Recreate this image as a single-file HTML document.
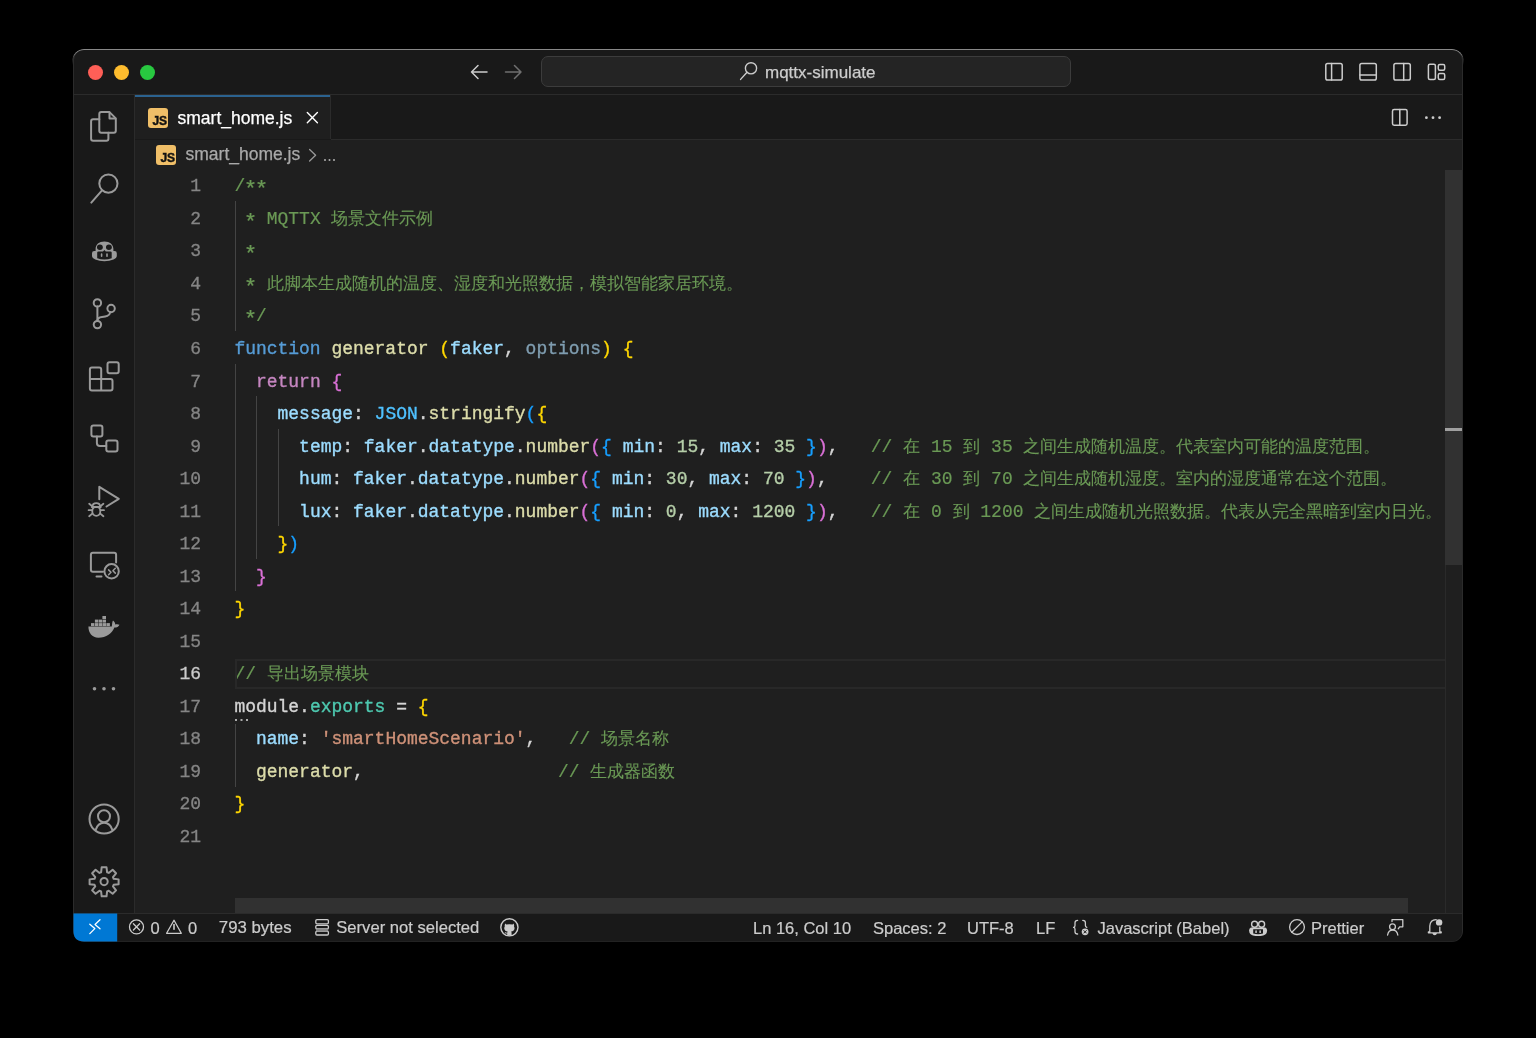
<!DOCTYPE html>
<html><head><meta charset="utf-8">
<style>
*{box-sizing:border-box;margin:0;padding:0}
html,body{width:1536px;height:1038px;background:#000;overflow:hidden}
body{position:relative;font-family:"Liberation Sans",sans-serif}
.a{position:absolute}
#win{position:absolute;left:73px;top:49px;width:1390px;height:893px;border-radius:11px;background:#191919;border:1px solid #2b2b2b;border-bottom-color:#222}
#hl{position:absolute;left:72px;top:48.6px;width:1392px;height:30px;border-radius:12px 12px 0 0;border:1.8px solid #888888;border-bottom:none;
 -webkit-mask-image:linear-gradient(#000 0,#000 3px,rgba(0,0,0,.3) 9px,transparent 16px)}
.hline{position:absolute;height:1px;background:#2b2b2b}
.vline{position:absolute;width:1px;background:#2b2b2b}
.dot{position:absolute;width:15px;height:15px;border-radius:50%;top:65px}
#search{position:absolute;left:541px;top:56px;width:530px;height:31px;border:1px solid #3c3c3c;border-radius:7px;background:#242424}
.ui{position:absolute;white-space:pre;line-height:1;-webkit-text-stroke:0.25px currentColor}
#tab{position:absolute;left:135px;top:95px;width:195px;height:44px;background:#1f1f1f;border-top:2px solid #2b628f}
#editor{position:absolute;left:135px;top:140px;width:1327px;height:773px;background:#1f1f1f}
#statusbar{position:absolute;left:74px;top:914px;width:1388px;height:27px;background:#191919;border-radius:0 0 10px 10px}
.st{position:absolute;top:917.8px;white-space:pre;color:#cccccc;font-size:16.5px;line-height:20px;-webkit-text-stroke:0.2px currentColor}
#code{position:absolute;left:234.4px;top:170.35px}
.row{position:absolute;left:0;font-family:"Liberation Mono",monospace;font-size:17.98px;white-space:pre;line-height:32.53px;height:32.53px;-webkit-text-stroke:0.35px currentColor}
#lns{position:absolute;left:140px;top:170.35px}
.lnr{position:absolute;left:0;width:61px;text-align:right;font-family:"Liberation Mono",monospace;font-size:17.98px;line-height:32.53px;color:#858585;-webkit-text-stroke:0.3px currentColor}
.lnr.act{color:#cccccc}
.z{font-size:17.2px;-webkit-text-stroke:0.1px currentColor}
.guide{position:absolute;width:1.2px;background:#444444}
.c{color:#6a9955;-webkit-text-stroke:0.2px currentColor}.ast{display:inline-block;width:10.788px;text-align:center;transform:translateY(3.5px) scale(1.25)}.k{color:#569cd6}.f{color:#dcdcaa}.p{color:#9cdcfe}.pu{color:#7f9db0}.r{color:#c586c0}
.b1{color:#ffd700}.b2{color:#da70d6}.b3{color:#179fff}.n{color:#b5cea8}.w{color:#d4d4d4}.j{color:#4fc1ff}.e{color:#4ec9b0}.s{color:#ce9178}
svg{position:absolute;overflow:visible}
.ic{fill:none;stroke:#9d9d9d;stroke-width:2}
.jsi{position:absolute;width:20px;height:20px;border-radius:3px;background:#f0bf68}
.jsi span{position:absolute;right:1.5px;bottom:1.5px;font:bold 12px/1 "Liberation Sans",sans-serif;color:#111;letter-spacing:-0.4px;-webkit-text-stroke:0.4px #111}
</style></head><body><div id="root" style="position:absolute;left:0;top:0;width:1536px;height:1038px;will-change:transform">
<div id="win"></div>
<div id="hl"></div>
<!-- title bar -->
<div class="dot" style="left:88px;background:#fe5f57"></div>
<div class="dot" style="left:114px;background:#febc2e"></div>
<div class="dot" style="left:140px;background:#28c840"></div>
<div class="hline" style="left:74px;top:94px;width:1388px"></div>
<div id="search"></div>
<div class="ui" style="left:765px;top:63.5px;font-size:17px;color:#cccccc">mqttx-simulate</div>

<!-- activity bar -->
<div class="vline" style="left:134px;top:95px;height:818px"></div>

<!-- tabs -->
<div class="hline" style="left:331px;top:139px;width:1131px"></div>
<div id="tab"></div>
<div class="vline" style="left:330px;top:95px;height:44px"></div>
<div class="jsi" style="left:148px;top:108px"><span>JS</span></div>
<div class="ui" style="left:177.5px;top:110px;font-size:17.5px;color:#ffffff">smart_home.js</div>

<!-- editor -->
<div id="editor"></div>
<div class="jsi" style="left:156px;top:145px"><span>JS</span></div>
<div class="ui" style="left:185.5px;top:146px;font-size:17.5px;color:#a9a9a9">smart_home.js</div>
<div class="a" style="left:324px;top:158.8px;width:2.4px;height:2.4px;border-radius:50%;background:#b0b0b0;box-shadow:4.5px 0 #b0b0b0,9px 0 #b0b0b0"></div>

<div id="lns">
<div class="lnr" style="top:0.00px">1</div>
<div class="lnr" style="top:32.53px">2</div>
<div class="lnr" style="top:65.06px">3</div>
<div class="lnr" style="top:97.59px">4</div>
<div class="lnr" style="top:130.12px">5</div>
<div class="lnr" style="top:162.65px">6</div>
<div class="lnr" style="top:195.18px">7</div>
<div class="lnr" style="top:227.71px">8</div>
<div class="lnr" style="top:260.24px">9</div>
<div class="lnr" style="top:292.77px">10</div>
<div class="lnr" style="top:325.30px">11</div>
<div class="lnr" style="top:357.83px">12</div>
<div class="lnr" style="top:390.36px">13</div>
<div class="lnr" style="top:422.89px">14</div>
<div class="lnr" style="top:455.42px">15</div>
<div class="lnr act" style="top:487.95px">16</div>
<div class="lnr" style="top:520.48px">17</div>
<div class="lnr" style="top:553.01px">18</div>
<div class="lnr" style="top:585.54px">19</div>
<div class="lnr" style="top:618.07px">20</div>
<div class="lnr" style="top:650.60px">21</div>
</div>
<div id="code">
<div class="row" style="top:0.00px"><span class="c">/<span class="ast">*</span><span class="ast">*</span></span></div>
<div class="row" style="top:32.53px"><span class="c"> <span class="ast">*</span> MQTTX <span class="z">场景文件示例</span></span></div>
<div class="row" style="top:65.06px"><span class="c"> <span class="ast">*</span></span></div>
<div class="row" style="top:97.59px"><span class="c"> <span class="ast">*</span> <span class="z">此脚本生成随机的温度、湿度和光照数据，模拟智能家居环境。</span></span></div>
<div class="row" style="top:130.12px"><span class="c"> <span class="ast">*</span>/</span></div>
<div class="row" style="top:162.65px"><span class="k">function</span><span class="w"> </span><span class="f">generator</span><span class="w"> </span><span class="b1">(</span><span class="p">faker</span><span class="w">, </span><span class="pu">options</span><span class="b1">)</span><span class="w"> </span><span class="b1">{</span></div>
<div class="row" style="top:195.18px"><span class="w">  </span><span class="r">return</span><span class="w"> </span><span class="b2">{</span></div>
<div class="row" style="top:227.71px"><span class="w">    </span><span class="p">message</span><span class="w">: </span><span class="j">JSON</span><span class="w">.</span><span class="f">stringify</span><span class="b3">(</span><span class="b1">{</span></div>
<div class="row" style="top:260.24px"><span class="w">      </span><span class="p">temp</span><span class="w">: </span><span class="p">faker</span><span class="w">.</span><span class="p">datatype</span><span class="w">.</span><span class="f">number</span><span class="b2">(</span><span class="b3">{</span><span class="w"> </span><span class="p">min</span><span class="w">: </span><span class="n">15</span><span class="w">, </span><span class="p">max</span><span class="w">: </span><span class="n">35</span><span class="w"> </span><span class="b3">}</span><span class="b2">)</span><span class="w">,   </span><span class="c">// <span class="z">在</span> 15 <span class="z">到</span> 35 <span class="z">之间生成随机温度。代表室内可能的温度范围。</span></span></div>
<div class="row" style="top:292.77px"><span class="w">      </span><span class="p">hum</span><span class="w">: </span><span class="p">faker</span><span class="w">.</span><span class="p">datatype</span><span class="w">.</span><span class="f">number</span><span class="b2">(</span><span class="b3">{</span><span class="w"> </span><span class="p">min</span><span class="w">: </span><span class="n">30</span><span class="w">, </span><span class="p">max</span><span class="w">: </span><span class="n">70</span><span class="w"> </span><span class="b3">}</span><span class="b2">)</span><span class="w">,    </span><span class="c">// <span class="z">在</span> 30 <span class="z">到</span> 70 <span class="z">之间生成随机湿度。室内的湿度通常在这个范围。</span></span></div>
<div class="row" style="top:325.30px"><span class="w">      </span><span class="p">lux</span><span class="w">: </span><span class="p">faker</span><span class="w">.</span><span class="p">datatype</span><span class="w">.</span><span class="f">number</span><span class="b2">(</span><span class="b3">{</span><span class="w"> </span><span class="p">min</span><span class="w">: </span><span class="n">0</span><span class="w">, </span><span class="p">max</span><span class="w">: </span><span class="n">1200</span><span class="w"> </span><span class="b3">}</span><span class="b2">)</span><span class="w">,   </span><span class="c">// <span class="z">在</span> 0 <span class="z">到</span> 1200 <span class="z">之间生成随机光照数据。代表从完全黑暗到室内日光。</span></span></div>
<div class="row" style="top:357.83px"><span class="w">    </span><span class="b1">}</span><span class="b3">)</span></div>
<div class="row" style="top:390.36px"><span class="w">  </span><span class="b2">}</span></div>
<div class="row" style="top:422.89px"><span class="b1">}</span></div>
<div class="row" style="top:455.42px"></div>
<div class="row" style="top:487.95px"><span class="c">// <span class="z">导出场景模块</span></span></div>
<div class="row" style="top:520.48px"><span class="w">module</span><span class="w">.</span><span class="e">exports</span><span class="w"> = </span><span class="b1">{</span></div>
<div class="row" style="top:553.01px"><span class="w">  </span><span class="p">name</span><span class="w">: </span><span class="s">'smartHomeScenario'</span><span class="w">,   </span><span class="c">// <span class="z">场景名称</span></span></div>
<div class="row" style="top:585.54px"><span class="w">  </span><span class="f">generator</span><span class="w">,                  </span><span class="c">// <span class="z">生成器函数</span></span></div>
<div class="row" style="top:618.07px"><span class="b1">}</span></div>
<div class="row" style="top:650.60px"></div>
</div>


<!-- editor decorations -->
<div class="a" style="left:234.5px;top:658.5px;width:1210px;height:30.5px;border:2px solid #282828;border-right:none"></div>
<div class="guide" style="left:235px;top:201px;height:130.1px"></div>
<div class="guide" style="left:235px;top:363.7px;height:227.7px"></div>
<div class="guide" style="left:256px;top:396.2px;height:162.7px"></div>
<div class="guide" style="left:277.5px;top:428.8px;height:97.6px"></div>
<div class="guide" style="left:235px;top:724px;height:62.6px"></div>
<div class="a" style="left:234.5px;top:719px;width:2px;height:2px;background:#aaa;box-shadow:5.5px 0 #aaa, 11px 0 #aaa"></div>
<!-- scrollbars -->
<div class="a" style="left:1445px;top:170px;width:1px;height:743px;background:#2a2a2a"></div>
<div class="a" style="left:1445px;top:170px;width:17px;height:395px;background:#313131"></div>
<div class="a" style="left:1445px;top:428px;width:17px;height:3px;background:#a0a0a0"></div>
<div class="a" style="left:235px;top:898px;width:1173px;height:15px;background:#313131"></div>

<!-- status bar -->
<div id="statusbar"></div>
<div class="hline" style="left:74px;top:913px;width:1388px"></div>
<div class="st" style="left:150.5px">0</div>
<div class="st" style="left:188px">0</div>
<div class="st" style="left:218.8px;font-size:16.8px">793 bytes</div>
<div class="st" style="left:336.3px;font-size:16.6px">Server not selected</div>
<div class="st" style="left:753px">Ln 16, Col 10</div>
<div class="st" style="left:873px">Spaces: 2</div>
<div class="st" style="left:967px">UTF-8</div>
<div class="st" style="left:1036px">LF</div>
<div class="st" style="left:1097.5px">Javascript (Babel)</div>
<div class="st" style="left:1311px">Prettier</div>
<!-- ICONS -->

<svg class="a" style="left:0;top:0" width="1536" height="1038" viewBox="0 0 1536 1038">
<g fill="none" stroke="#cccccc" stroke-width="1.5" stroke-linecap="round" stroke-linejoin="round">
  <!-- back/forward -->
  <path d="M487,72 H471.5 M478,65.5 L471.5,72 L478,78.5"/>
  <path d="M505.5,72 H521 M514.5,65.5 L521,72 L514.5,78.5" stroke="#6f6f6f"/>
  <!-- search icon -->
  <circle cx="751" cy="68.3" r="5.6" stroke-width="1.4"/>
  <path d="M747,72.3 L740.6,79.4" stroke-width="1.4"/>
  <!-- layout icons -->
  <rect x="1325.8" y="63.4" width="16.4" height="16.6" rx="1.8"/><path d="M1331.6,63.4 V80"/>
  <rect x="1359.9" y="63.4" width="16.4" height="16.6" rx="1.8"/><path d="M1359.9,74.9 H1376.3"/>
  <rect x="1393.9" y="63.4" width="16.4" height="16.6" rx="1.8"/><path d="M1403.7,63.4 V80"/>
  <rect x="1428.4" y="64.2" width="7" height="15.4" rx="1.5"/>
  <rect x="1438.3" y="64.6" width="6.4" height="5.6" rx="1.5"/><rect x="1438.3" y="73.6" width="6.4" height="5.8" rx="1.5"/>
  <!-- tab close -->
  <path d="M307.3,112.6 L317.4,122.8 M317.4,112.6 L307.3,122.8" stroke="#ffffff" stroke-width="1.4"/>
  <!-- breadcrumb chevron -->
  <path d="M309.6,149.5 L315.6,155.2 L309.6,161" stroke="#999999" stroke-width="1.3"/>
  <!-- split editor -->
  <rect x="1392.5" y="109.6" width="14.6" height="15.6" rx="1.6"/><path d="M1399.8,109.6 V125.2"/>
</g>
<g fill="#cccccc">
  <circle cx="1426.4" cy="117.7" r="1.4"/><circle cx="1433" cy="117.7" r="1.4"/><circle cx="1439.6" cy="117.7" r="1.4"/>
</g>
<!-- activity bar -->
<g fill="none" stroke="#9a9a9a" stroke-width="2" stroke-linecap="round" stroke-linejoin="round">
  <!-- explorer -->
  <path d="M99.3,114.1 Q99.3,112.1 101.3,112.1 H109.5 L115.8,118.4 V130.7 Q115.8,132.7 113.8,132.7 H101.3 Q99.3,132.7 99.3,130.7 Z"/>
  <path d="M109.5,112.6 V118.4 H115.3"/>
  <path d="M99.3,119.3 H93.1 Q91.1,119.3 91.1,121.3 V138.7 Q91.1,140.7 93.1,140.7 H106.4 Q108.4,140.7 108.4,138.7 V132.7"/>
  <!-- search -->
  <circle cx="108.4" cy="183.6" r="9.1"/>
  <path d="M101.8,190.6 L91.3,202.6"/>
  <!-- source control -->
  <circle cx="97.4" cy="302.9" r="3.7"/>
  <circle cx="111.1" cy="308.5" r="3.7"/>
  <circle cx="97.4" cy="324.6" r="3.7"/>
  <path d="M97.4,306.6 V320.9"/>
  <path d="M110.3,312.1 C109.5,316.2 106,316.6 102,316.9 C99.2,317.1 97.4,318.3 97.4,320.9"/>
  <!-- extensions -->
  <path d="M91.9,367.6 H99.2 Q101.2,367.6 101.2,369.6 V379.1 H110.5 Q112.5,379.1 112.5,381.1 V388.4 Q112.5,390.4 110.5,390.4 H91.9 Q89.9,390.4 89.9,388.4 V369.6 Q89.9,367.6 91.9,367.6 Z M89.9,379.1 H101.2 V390.4"/>
  <rect x="107.5" y="362.3" width="11.2" height="11" rx="2"/>
  <!-- remote explorer -->
  <rect x="91.4" y="425.6" width="11" height="11" rx="2"/>
  <rect x="106.3" y="440.6" width="11.2" height="11" rx="2"/>
  <path d="M96.9,436.6 V443 Q96.9,446 99.9,446 H106.3"/>
  <!-- run and debug -->
  <path d="M99.3,499.3 V486.8 L118.8,498.8 L106.5,506.5"/>
  <path d="M92.5,506.6 Q92.5,503.2 96.3,503.2 Q100.1,503.2 100.1,506.6 M91.8,507 H100.8" stroke-width="1.8"/>
  <rect x="92.3" y="506.8" width="8" height="9" rx="4" stroke-width="1.8"/>
  <path d="M89.2,503.8 L92.2,506.3 M88.6,510.2 H92 M89.2,516.2 L92.3,513.6 M103.4,503.8 L100.4,506.3 M104,510.2 H100.6 M103.4,516.2 L100.3,513.6" stroke-width="1.8"/>
  <!-- remote window -->
  <path d="M103,571.8 H92.9 Q90.9,571.8 90.9,569.8 V554.8 Q90.9,552.8 92.9,552.8 H114.1 Q116.1,552.8 116.1,554.8 V562.6"/>
  <path d="M96.5,576.6 H101.5"/>
  <circle cx="111.6" cy="571.3" r="7.2"/>
  <path d="M108.6,569.9 L111,572.3 L108.6,574.7 M115.3,568.3 L112.9,570.7 L115.3,573.1" stroke-width="1.5"/>
  <!-- account -->
  <circle cx="104.1" cy="819" r="14.6"/>
  <circle cx="104" cy="816.2" r="6"/>
  <path d="M95.6,830 C97,825.5 100.3,822.8 104,822.8 C107.7,822.8 111,825.5 112.4,830"/>
  <!-- gear -->
  <path d="M101.67,867.30 L106.53,867.30 L107.11,872.26 L108.72,872.93 L112.64,869.83 L116.07,873.26 L112.97,877.18 L113.64,878.79 L118.60,879.37 L118.60,884.23 L113.64,884.81 L112.97,886.42 L116.07,890.34 L112.64,893.77 L108.72,890.67 L107.11,891.34 L106.53,896.30 L101.67,896.30 L101.09,891.34 L99.48,890.67 L95.56,893.77 L92.13,890.34 L95.23,886.42 L94.56,884.81 L89.60,884.23 L89.60,879.37 L94.56,878.79 L95.23,877.18 L92.13,873.26 L95.56,869.83 L99.48,872.93 L101.09,872.26 Z"/>
  <circle cx="104.1" cy="881.6" r="3.6"/>
</g>
<g fill="#9a9a9a">
  <!-- copilot -->
  <path d="M95.6,249 C95.6,244.5 99,241.5 104.4,241.5 C109.8,241.5 113.4,244.5 113.4,249 V251 H114.5 Q116.8,251 116.8,253.3 V256.2 Q116.8,258.2 113.5,259.6 Q109.5,261.2 104.4,261.2 Q99.3,261.2 95.3,259.6 Q92,258.2 92,256.2 V253.3 Q92,251 94.3,251 H95.6 Z"/>
  <ellipse cx="99.9" cy="247.2" rx="2.9" ry="2.7" fill="#1a1a1a"/>
  <ellipse cx="108.9" cy="247.2" rx="2.9" ry="2.7" fill="#1a1a1a"/>
  <path d="M97.2,252.6 Q97.2,251.4 98.6,251.4 H103 L104.4,250 L105.8,251.4 H110.3 Q111.7,251.4 111.7,252.6 V258.2 Q104.4,260.6 97.2,258.2 Z" fill="#1a1a1a"/>
  <rect x="100.8" y="253.2" width="1.6" height="3.8" rx="0.8"/>
  <rect x="106.2" y="253.2" width="1.6" height="3.8" rx="0.8"/>
  <!-- docker -->
  <rect x="102.4" y="616" width="3.6" height="3"/>
  <rect x="94.9" y="619.6" width="3.4" height="3"/><rect x="98.7" y="619.6" width="3.4" height="3"/><rect x="102.5" y="619.6" width="3.5" height="3"/>
  <rect x="91" y="623.1" width="3.4" height="3"/><rect x="94.9" y="623.1" width="3.4" height="3"/><rect x="98.7" y="623.1" width="3.4" height="3"/><rect x="102.5" y="623.1" width="3.5" height="3"/><rect x="106.4" y="623.1" width="3.5" height="3"/>
  <path d="M88.4,626.6 H111.8 C112.2,624.4 112,622 113,620.4 C114.6,621.6 115.3,623 115.2,624.4 C116.6,624 118.2,624 119.5,624.7 C118.6,626.6 116.8,627.6 114.4,627.6 C112.3,633.2 106.2,637.8 98.4,637.8 C92,637.8 88.4,633 88.4,626.6 Z"/>
  <!-- dots -->
  <circle cx="94.5" cy="688.8" r="1.8"/><circle cx="104" cy="688.8" r="1.8"/><circle cx="113.5" cy="688.8" r="1.8"/>
</g>
<!-- status bar icons -->
<path d="M73.5,913.5 H117.2 V941.5 H84 Q73.5,941.5 73.5,931 Z" fill="#0078d4"/>
<g fill="none" stroke="#ffffff" stroke-width="1.3" stroke-linecap="round" stroke-linejoin="round">
  <path d="M89.8,924.2 L94.8,928.6 L89.8,933.6 M100,919.8 L95,924.4 L100,928.8"/>
</g>
<g fill="none" stroke="#cccccc" stroke-width="1.3" stroke-linecap="round" stroke-linejoin="round">
  <circle cx="136.5" cy="926.9" r="7"/>
  <path d="M133.4,923.8 L139.6,930 M139.6,923.8 L133.4,930"/>
  <path d="M174,920.2 L181.3,933.3 H166.6 Z"/>
  <path d="M174,924.6 V929.2" stroke-width="1.6"/>
  <!-- server -->
  <rect x="315.8" y="919.6" width="12.6" height="4.2" rx="1.2"/>
  <rect x="315.8" y="925.3" width="12.6" height="3.6" rx="1.2"/>
  <rect x="315.8" y="931.2" width="12.6" height="3.8" rx="1.2"/>
  <!-- github -->
  <circle cx="509.4" cy="927.3" r="8.6" stroke-width="1.4"/>
  <!-- braces -->
  <path d="M1077.6,920.4 Q1075,920.4 1075,922.8 V925.6 Q1075,927.2 1073.6,927.4 Q1075,927.6 1075,929.2 V931.8 Q1075,934 1077.6,934"/>
  <path d="M1082.8,920.4 Q1085.4,920.4 1085.4,922.8 V925.6 Q1085.4,927 1086.8,927.4"/>
  <!-- prettier -->
  <circle cx="1297" cy="927.1" r="7.4"/>
  <path d="M1291.8,932.3 L1302.2,921.9"/>
  <!-- feedback -->
  <circle cx="1392.5" cy="926.8" r="2.9"/>
  <path d="M1387.6,935 Q1388.4,930.2 1392.7,930.2 Q1397,930.2 1397.8,935"/>
  <path d="M1392,921.5 V919.6 H1402.8 V926.8 H1399.6 L1398.2,928.8"/>
  <!-- bell -->
  <path d="M1436.2,919.6 Q1430.2,919.8 1429.8,926 V932 H1428.4 V932.8 H1441.2 V932 H1439.8 V927.2"/>
</g>
<g fill="#cccccc">
  <circle cx="1085.1" cy="931.8" r="3.4"/>
  <path d="M1083.6,930.3 L1086.6,933.3 M1086.6,930.3 L1083.6,933.3" stroke="#1a1a1a" stroke-width="1"/>
  <circle cx="1439.1" cy="922.4" r="3.2"/>
  <path d="M1432.4,933 H1437 Q1436.6,935.2 1434.7,935.2 Q1432.8,935.2 1432.4,933 Z"/>
  <!-- server ticks / fill -->
  <rect x="316" y="928.9" width="12.2" height="2.3" fill="#888"/>
  <!-- github cat -->
  <path d="M505.2,923.4 L506.2,924.6 Q509.4,923.8 512.6,924.6 L513.6,923.4 Q514.4,925.2 514,926.4 Q514.8,927.6 514.4,929.2 Q513.6,931.4 511.2,931.6 Q511.6,932.4 511.6,933.4 V935.4 H507.2 V933.6 Q505.4,933.8 504.6,932.4 Q506,932.2 507.2,933 Q507.2,932.2 507.6,931.6 Q505.2,931.4 504.4,929.2 Q504,927.6 504.8,926.4 Q504.4,925.2 505.2,923.4 Z"/>
  <!-- copilot status -->
  <path d="M1250.8,927.6 Q1249.1,928.4 1249.1,930.6 Q1249.1,934.6 1253,935.6 Q1258.1,936.6 1263.2,935.6 Q1267.1,934.6 1267.1,930.6 Q1267.1,928.4 1265.4,927.6 Z"/>
  <path d="M1253.2,929.2 H1263 V933.4 Q1258.1,935 1253.2,933.4 Z" fill="#1a1a1a"/>
  <rect x="1255.3" y="930.3" width="1.5" height="2.8" rx="0.7"/><rect x="1259.4" y="930.3" width="1.5" height="2.8" rx="0.7"/>
</g>
<g fill="none" stroke="#cccccc" stroke-width="1.4">
  <circle cx="1254.6" cy="924.2" r="3"/><circle cx="1261.6" cy="924.2" r="3"/>
</g>
</svg>

</div></body></html>
